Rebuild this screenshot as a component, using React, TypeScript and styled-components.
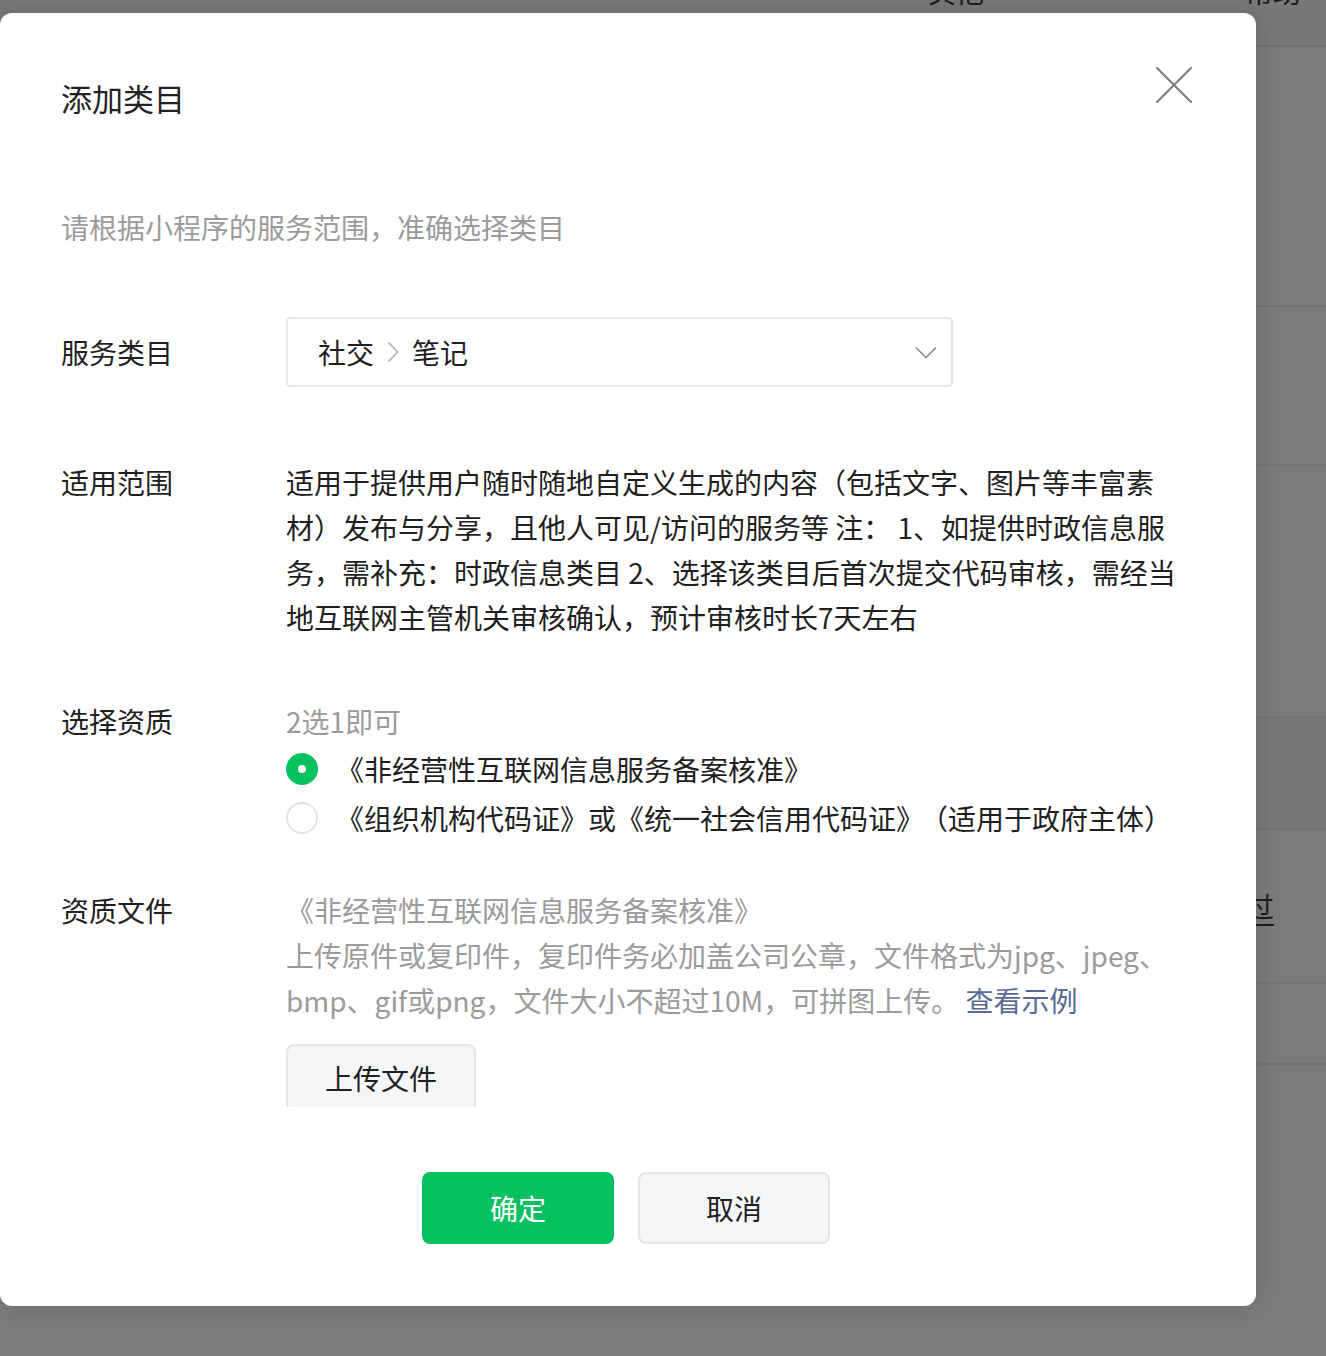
import React from "react";
import styled, { createGlobalStyle } from "styled-components";

const Global = createGlobalStyle`
  html, body { margin: 0; padding: 0; }
  body {
    background: #7a7a7a;
    font-family: "Noto Sans CJK SC", "Noto Sans", sans-serif;
    -webkit-font-smoothing: antialiased;
  }
  * { box-sizing: border-box; }
`;

/* ---------- dimmed page behind the dialog ---------- */

const Page = styled.div`
  position: relative;
  width: 1326px;
  height: 1356px;
  overflow: hidden;
  background: #7b7b7b;
  display: flex;
  flex-direction: column;
`;

const PageHeader = styled.div`
  flex: none;
  height: 47px;
  background: #787878;
  border-bottom: 2px solid #707070;
  display: flex;
  align-items: flex-start;
`;

const HeaderItem = styled.span<{ $ml: number }>`
  margin-left: ${(p) => p.$ml}px;
  margin-top: -24px;
  font-size: 28px;
  line-height: 30px;
  color: #1c1c1c;
`;

const PageRow = styled.div<{ $h: number; $bg?: string }>`
  flex: none;
  height: ${(p) => p.$h}px;
  background: ${(p) => p.$bg || "#7b7b7b"};
  border-bottom: 2px solid #747474;
  display: flex;
  align-items: center;
  justify-content: flex-end;
  padding-right: 52px;
`;

const PageLink = styled.span`
  font-size: 28px;
  color: #1e1e1e;
  text-decoration: underline;
  text-underline-offset: 6px;
`;

/* ---------- dialog ---------- */

const Modal = styled.div`
  position: absolute;
  top: 13px;
  left: 0;
  width: 1256px;
  height: 1293px;
  background: #fff;
  border-radius: 12px;
  box-shadow: 0 0 24px rgba(0, 0, 0, 0.14);
  display: flex;
  flex-direction: column;
`;

const CloseButton = styled.button`
  position: absolute;
  top: 54px;
  right: 64px;
  width: 36px;
  height: 36px;
  padding: 0;
  border: 0;
  background: transparent;
  cursor: pointer;
  display: flex;
`;

const Header = styled.div`
  flex: none;
  padding: 61px 72px 0 61px;
`;

const Title = styled.h2`
  margin: 0;
  font-size: 31px;
  line-height: 48px;
  font-weight: 400;
  color: #222;
`;

const Body = styled.div`
  flex: 1;
  min-height: 0;
  overflow: hidden;
  padding: 0 72px 0 61px;
`;

const Subtitle = styled.p`
  margin: 85px 0 0;
  font-size: 28px;
  line-height: 40px;
  color: #9b9b9b;
`;

const Form = styled.div`
  margin-top: 70px;
  display: flex;
  flex-direction: column;
`;

const Row = styled.div<{ $mt?: number; $center?: boolean }>`
  margin-top: ${(p) => p.$mt || 0}px;
  display: grid;
  grid-template-columns: 225px 1fr;
  align-items: ${(p) => (p.$center ? "center" : "start")};
`;

const Label = styled.div`
  font-size: 28px;
  line-height: 45px;
  color: #1f1f1f;
`;

const Select = styled.div`
  width: 667px;
  height: 70px;
  border: 2px solid #e4e7eb;
  border-radius: 4px;
  display: flex;
  align-items: center;
  padding: 0 14px 0 30px;
`;

const Crumbs = styled.div`
  flex: 1;
  display: flex;
  align-items: center;
  gap: 13px;
  font-size: 28px;
  line-height: 40px;
  color: #1f1f1f;
`;

const Text = styled.div<{ $muted?: boolean }>`
  font-size: 28px;
  line-height: 45px;
  color: ${(p) => (p.$muted ? "#9b9b9b" : "#1f1f1f")};
`;

const Link = styled.a`
  color: #576b95;
  text-decoration: none;
  cursor: pointer;
`;

const RadioOption = styled.label`
  height: 49px;
  display: flex;
  align-items: center;
  gap: 18px;
  font-size: 28px;
  color: #1f1f1f;
  cursor: pointer;
`;

const Note = styled.span`
  margin-left: 10px;
`;

const RadioDot = styled.span<{ $checked?: boolean }>`
  flex: none;
  width: 32px;
  height: 32px;
  border-radius: 50%;
  display: flex;
  align-items: center;
  justify-content: center;
  background: ${(p) => (p.$checked ? "#07c160" : "#fff")};
  border: ${(p) => (p.$checked ? "none" : "2px solid #e3e3e3")};
  &::after {
    content: "";
    display: ${(p) => (p.$checked ? "block" : "none")};
    width: 8px;
    height: 8px;
    border-radius: 50%;
    background: #fff;
  }
`;

const UploadButton = styled.button`
  margin-top: 21px;
  width: 190px;
  height: 68px;
  border: 2px solid #e4e4e4;
  border-radius: 8px;
  background: #f5f6f7;
  font-family: inherit;
  font-size: 28px;
  color: #1f1f1f;
  cursor: pointer;
`;

const Footer = styled.div`
  flex: none;
  display: flex;
  justify-content: center;
  gap: 24px;
  padding: 65px 4px 62px 0;
`;

const Button = styled.button<{ $primary?: boolean }>`
  width: 192px;
  height: 72px;
  border-radius: 8px;
  font-family: inherit;
  font-size: 28px;
  cursor: pointer;
  border: ${(p) => (p.$primary ? "none" : "2px solid #e4e4e6")};
  background: ${(p) => (p.$primary ? "#07c160" : "#f5f6f8")};
  color: ${(p) => (p.$primary ? "#fff" : "#1f1f1f")};
`;

const CloseIcon = () => (
  <svg width="36" height="36" viewBox="0 0 36 36">
    <path d="M1 1 L35 35 M35 1 L1 35" stroke="#7f7f7f" strokeWidth="2.2" strokeLinecap="round" fill="none" />
  </svg>
);

const ChevronRight = () => (
  <svg width="12" height="22" viewBox="0 0 12 22">
    <polyline points="1.5,1.5 10.5,11 1.5,20.5" stroke="#b0b0b0" strokeWidth="1.6" fill="none" />
  </svg>
);

const ChevronDown = () => (
  <svg width="22" height="13" viewBox="0 0 22 13">
    <polyline points="1,1.5 11,11.5 21,1.5" stroke="#8a8a8a" strokeWidth="1.6" fill="none" />
  </svg>
);

export default function App() {
  return (
    <>
      <Global />
      <Page>
        <PageHeader>
          <HeaderItem $ml={928}>其他</HeaderItem>
          <HeaderItem $ml={91}>一</HeaderItem>
          <HeaderItem $ml={142}>帮助</HeaderItem>
        </PageHeader>
        <PageRow $h={260} />
        <PageRow $h={159} />
        <PageRow $h={252} />
        <PageRow $h={112} $bg="#777978" />
        <PageRow $h={154}>
          <PageLink>通过</PageLink>
        </PageRow>
        <PageRow $h={81} />

        <Modal role="dialog" aria-label="添加类目">
          <CloseButton aria-label="关闭">
            <CloseIcon />
          </CloseButton>
          <Header>
            <Title>添加类目</Title>
          </Header>
          <Body>
            <Subtitle>请根据小程序的服务范围，准确选择类目</Subtitle>
            <Form>
              <Row $center>
                <Label>服务类目</Label>
                <Select>
                  <Crumbs>
                    <span>社交</span>
                    <ChevronRight />
                    <span>笔记</span>
                  </Crumbs>
                  <ChevronDown />
                </Select>
              </Row>

              <Row $mt={73}>
                <Label>适用范围</Label>
                <Text>
                  适用于提供用户随时随地自定义生成的内容（包括文字、图片等丰富素材）发布与分享，且他人可见/访问的服务等 注： 1、如提供时政信息服务，需补充：时政信息类目 2、选择该类目后首次提交代码审核，需经当地互联网主管机关审核确认，预计审核时长7天左右
                </Text>
              </Row>

              <Row $mt={59}>
                <Label>选择资质</Label>
                <div>
                  <Text $muted>2选1即可</Text>
                  <RadioOption>
                    <RadioDot $checked />
                    《非经营性互联网信息服务备案核准》
                  </RadioOption>
                  <RadioOption>
                    <RadioDot />
                    <span>
                      《组织机构代码证》或《统一社会信用代码证》<Note>（适用于政府主体）</Note>
                    </span>
                  </RadioOption>
                </div>
              </Row>

              <Row $mt={46}>
                <Label>资质文件</Label>
                <div>
                  <Text $muted>
                    《非经营性互联网信息服务备案核准》
                    <br />
                    上传原件或复印件，复印件务必加盖公司公章，文件格式为jpg、jpeg、
                    <br />
                    bmp、gif或png，文件大小不超过10M，可拼图上传。 <Link>查看示例</Link>
                  </Text>
                  <UploadButton>上传文件</UploadButton>
                </div>
              </Row>
            </Form>
          </Body>
          <Footer>
            <Button $primary>确定</Button>
            <Button>取消</Button>
          </Footer>
        </Modal>
      </Page>
    </>
  );
}
